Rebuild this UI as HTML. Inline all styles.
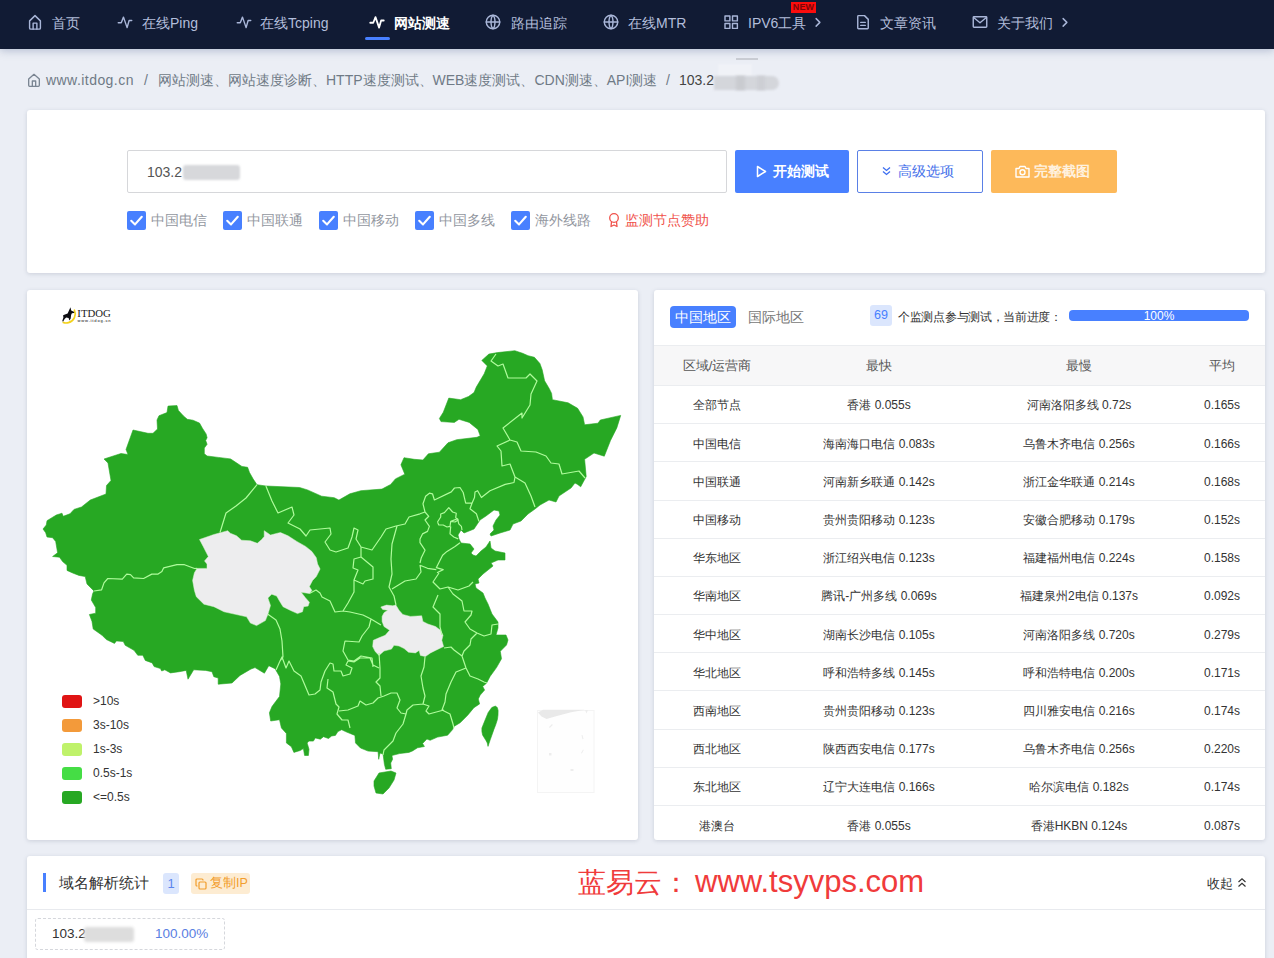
<!DOCTYPE html>
<html lang="zh"><head><meta charset="utf-8"><title>ITDOG</title>
<style>
*{box-sizing:border-box;margin:0;padding:0}
html,body{width:1274px;height:958px;overflow:hidden;background:#ebeef5;font-family:"Liberation Sans",sans-serif;font-size:14px;color:#333}
#pg{position:relative;width:1274px;height:958px;overflow:hidden}
.abs{position:absolute;white-space:nowrap}
#nav{position:absolute;left:0;top:0;width:1274px;height:49px;background:#111b34;box-shadow:0 2px 8px rgba(120,135,170,.45)}
.ni{position:absolute;top:0;height:46px;line-height:46px;font-size:14px;color:#b3bedb;white-space:nowrap}
.ni.act{color:#fff;font-weight:bold}
.nic{position:absolute;top:13px;width:18px;height:18px}
.nic svg{display:block;width:18px;height:18px;fill:none;stroke:#a9b6d8;stroke-width:1.9;stroke-linecap:round;stroke-linejoin:round}
.bc{position:absolute;top:70px;height:20px;line-height:20px;font-size:14px;color:#6f7a86;white-space:nowrap}
.card{position:absolute;background:#fff;border-radius:3px;box-shadow:0 1px 4px rgba(60,70,100,.18)}
.btn{position:absolute;top:150px;height:43px;line-height:43px;border-radius:2px;font-size:14px;text-align:center;white-space:nowrap}
.cb{position:absolute;top:211px;width:19px;height:19px;background:#4880ff;border-radius:2px}
.cb svg{display:block;width:19px;height:19px}
.cl{position:absolute;top:210px;height:20px;line-height:20px;font-size:14px;color:#93979f;white-space:nowrap}
.lg{position:absolute;left:62px;width:20px;height:13px;border-radius:3px}
.lt{position:absolute;left:93px;height:14px;line-height:14px;font-size:12px;color:#333;white-space:nowrap}
.hl{position:absolute;left:654px;width:611px;height:1px;background:#ebedf0}
.td{position:absolute;height:20px;line-height:20px;font-size:12px;color:#333;text-align:center;white-space:nowrap}
.th{position:absolute;top:356px;height:20px;line-height:20px;font-size:13px;color:#555;text-align:center;white-space:nowrap}
.blur{position:absolute;background:#d6d6d6;border-radius:3px;filter:blur(1.5px)}
</style></head><body><div id="pg">

<!-- NAV -->
<div id="nav">
 <div class="nic" style="left:26px"><svg viewBox="0 0 24 24"><path d="M4.800 10.500 12 3.500l7.200 7V20a1.500 1.500 0 0 1-1.500 1.500H6.300A1.500 1.500 0 0 1 4.800 20Z"/><path d="M9.500 21.500v-8h5v8"/></svg></div>
 <div class="ni" style="left:52px">首页</div>
 <div class="nic" style="left:116px"><svg viewBox="0 0 24 24"><path d="M3 13h4L10 5.500l4.800 14 2.700-9.500h3.500"/></svg></div>
 <div class="ni" style="left:142px">在线Ping</div>
 <div class="nic" style="left:235px"><svg viewBox="0 0 24 24"><path d="M3 13h4L10 5.500l4.800 14 2.700-9.500h3.500"/></svg></div>
 <div class="ni" style="left:260px">在线Tcping</div>
 <div class="nic" style="left:368px"><svg viewBox="0 0 24 24" style="stroke:#fff;stroke-width:2.4"><path d="M3 13h4L10 5.500l4.800 14 2.700-9.500h3.500"/></svg></div>
 <div class="ni act" style="left:394px">网站测速</div>
 <div class="abs" style="left:365px;top:37px;width:25px;height:3px;border-radius:2px;background:#4880ff"></div>
 <div class="nic" style="left:484px"><svg viewBox="0 0 24 24"><circle cx="12" cy="12" r="9"/><path d="M3 12h18M12 3c-3.5 3-3.5 15 0 18M12 3c3.5 3 3.5 15 0 18"/></svg></div>
 <div class="ni" style="left:511px">路由追踪</div>
 <div class="nic" style="left:602px"><svg viewBox="0 0 24 24"><circle cx="12" cy="12" r="9"/><path d="M3 12h18M12 3c-3.5 3-3.5 15 0 18M12 3c3.5 3 3.5 15 0 18"/></svg></div>
 <div class="ni" style="left:628px">在线MTR</div>
 <div class="nic" style="left:722px"><svg viewBox="0 0 24 24"><rect x="4" y="4" width="6.5" height="6.5"/><rect x="14" y="4" width="6.5" height="6.5"/><rect x="4" y="14" width="6.5" height="6.5"/><rect x="14" y="14" width="6.5" height="6.5"/></svg></div>
 <div class="ni" style="left:748px">IPV6工具</div>
 <div class="abs" style="left:791px;top:2px;width:25px;height:11px;background:#fb0d0d;color:#7a0606;font-size:9px;line-height:11px;text-align:center;font-weight:bold;letter-spacing:.2px">NEW</div>
 <div class="nic" style="left:809px"><svg viewBox="0 0 24 24"><path d="M9.5 7.5 14.5 12.5 9.5 17.5"/></svg></div>
 <div class="nic" style="left:854px"><svg viewBox="0 0 24 24"><path d="M6 3.5h8l5 5V20a1 1 0 0 1-1 1H6a1 1 0 0 1-1-1V4.500a1 1 0 0 1 1-1Z"/><path d="M9 12.500h6M9 16.500h6"/></svg></div>
 <div class="ni" style="left:880px">文章资讯</div>
 <div class="nic" style="left:971px"><svg viewBox="0 0 24 24"><rect x="3" y="5" width="18" height="14" rx="1"/><path d="M3.500 6 12 13l8.500-7"/></svg></div>
 <div class="ni" style="left:997px">关于我们</div>
 <div class="nic" style="left:1056px"><svg viewBox="0 0 24 24"><path d="M9.500 7.500 14.500 12.500 9.500 17.500"/></svg></div>
</div>

<!-- BREADCRUMB -->
<div class="abs" style="left:26px;top:72px;width:16px;height:16px"><svg viewBox="0 0 24 24" width="16" height="16" fill="none" stroke="#7a8592" stroke-width="2" stroke-linejoin="round"><path d="M4 10.500 12 3.500l8 7V20a1.500 1.500 0 0 1-1.500 1.500h-13A1.500 1.500 0 0 1 4 20Z"/><path d="M9.500 21.500v-8h5v8"/></svg></div>
<div class="bc" style="left:46px;letter-spacing:.45px">www.itdog.cn</div>
<div class="bc" style="left:144px">/</div>
<div class="bc" style="left:158px">网站测速、网站速度诊断、HTTP速度测试、WEB速度测试、CDN测速、API测速</div>
<div class="bc" style="left:666px">/</div>
<div class="bc" style="left:679px;color:#444">103.2</div>
<div class="abs" style="left:718px;top:64px;width:34px;height:12px;background:#f0f2f7;filter:blur(1px)"></div><div class="blur" style="left:714px;top:75.500px;width:65px;height:14.500px;background:#d4d6db;border-radius:1px 8px 8px 1px;filter:blur(1px)"></div><div class="abs" style="left:736px;top:76px;width:9px;height:14px;background:#c9cbd0;filter:blur(1.500px)"></div><div class="abs" style="left:757px;top:76px;width:8px;height:14px;background:#cdcfd4;filter:blur(1.500px)"></div>
<div class="abs" style="left:736px;top:58px;width:22px;height:2px;background:#c9ccd3;filter:blur(.6px)"></div>

<!-- CARD 1 -->
<div class="card" style="left:27px;top:110px;width:1238px;height:163px"></div>
<div class="abs" style="left:127px;top:150px;width:600px;height:43px;border:1px solid #d6d7da;border-radius:2px;background:#fff"></div>
<div class="abs" style="left:147px;top:161.500px;height:20px;line-height:20px;font-size:14px;color:#555">103.2</div>
<div class="blur" style="left:183px;top:165px;width:57px;height:14.500px;background:#d7d8db;filter:blur(.8px)"></div>
<div class="btn" style="left:735px;width:114px;background:#4880ff;color:#fff;font-weight:bold"><svg style="vertical-align:-2px;margin-right:6px" width="11" height="13" viewBox="0 0 11 13" fill="none" stroke="#fff" stroke-width="1.5" stroke-linejoin="round"><path d="M1.500 1.500 9.500 6.500 1.500 11.500Z"/></svg>开始测试</div>
<div class="btn" style="left:857px;width:126px;background:#fff;color:#4671ea;border:1px solid #5a80e6;line-height:41px;padding-right:5px"><svg style="vertical-align:0px;margin-right:7px" width="9" height="10" viewBox="0 0 9 10" fill="none" stroke="#3d6ff0" stroke-width="1.300"><path d="M1 1.500 4.500 4.500 8 1.500M1 5.500 4.500 8.500 8 5.500"/></svg>高级选项</div>
<div class="btn" style="left:991px;width:126px;background:#fdb95a;color:#fff1de;font-weight:bold;padding-right:4px"><svg style="vertical-align:-2px;margin-right:4px" width="15" height="13" viewBox="0 0 15 13" fill="none" stroke="#fff" stroke-width="1.400" stroke-linejoin="round"><path d="M1 3.500h3l1-2h5l1 2h3v8.500H1Z"/><circle cx="7.500" cy="7.300" r="2.500"/></svg>完整截图</div>

<div class="cb" style="left:127px"><svg viewBox="0 0 18 18" fill="none" stroke="#fff" stroke-width="2" stroke-linecap="round" stroke-linejoin="round"><path d="M4 9.300 7.600 12.700 14 5.500"/></svg></div><div class="cl" style="left:151px">中国电信</div>
<div class="cb" style="left:223px"><svg viewBox="0 0 18 18" fill="none" stroke="#fff" stroke-width="2" stroke-linecap="round" stroke-linejoin="round"><path d="M4 9.300 7.600 12.700 14 5.500"/></svg></div><div class="cl" style="left:247px">中国联通</div>
<div class="cb" style="left:319px"><svg viewBox="0 0 18 18" fill="none" stroke="#fff" stroke-width="2" stroke-linecap="round" stroke-linejoin="round"><path d="M4 9.300 7.600 12.700 14 5.500"/></svg></div><div class="cl" style="left:343px">中国移动</div>
<div class="cb" style="left:415px"><svg viewBox="0 0 18 18" fill="none" stroke="#fff" stroke-width="2" stroke-linecap="round" stroke-linejoin="round"><path d="M4 9.300 7.600 12.700 14 5.500"/></svg></div><div class="cl" style="left:439px">中国多线</div>
<div class="cb" style="left:511px"><svg viewBox="0 0 18 18" fill="none" stroke="#fff" stroke-width="2" stroke-linecap="round" stroke-linejoin="round"><path d="M4 9.300 7.600 12.700 14 5.500"/></svg></div><div class="cl" style="left:535px">海外线路</div>
<svg class="abs" style="left:607px;top:212px" width="14" height="16" viewBox="0 0 14 16" fill="none" stroke="#f0524b" stroke-width="1.300" stroke-linejoin="round"><circle cx="7" cy="6" r="4.300"/><path d="M4.500 9.800 4 14.500 7 13 10 14.500 9.500 9.800"/></svg>
<div class="cl" style="left:625px;color:#f0524b">监测节点赞助</div>

<!-- CARD 2 (map) -->
<div class="card" style="left:27px;top:290px;width:611px;height:550px"></div>
<svg class="abs" style="left:0;top:0" width="1274" height="958" viewBox="0 0 1274 958">
<path d="M168,406.1 L177,405.6 L178.4,410.4 L183.5,416 L187.3,419.3 L193,420.2 L199.5,423.1 L202.4,428.2 L206.1,433.9 L207.1,437.7 L205.7,440.5 L207.1,444.3 L204.3,448 L204.3,453.7 L207.1,456 L218.4,457.4 L230.6,458.9 L235.3,462.1 L241.9,466.4 L247.6,467.3 L249.5,472.5 L253.2,479.1 L257,484.7 L265.9,486 L299.6,487.5 L307.5,489.9 L321.6,496.2 L334.2,497.7 L338.9,500.1 L349.9,493.8 L360.9,490.7 L382,489.1 L390.7,484.4 L395.4,478.9 L404.8,474.2 L400.9,464.8 L404,457.7 L414.2,459.3 L422.9,460 L428.4,453.8 L439.4,452.2 L448,442.8 L456.7,439.7 L477,437.3 L480.2,435.8 L477.9,429.5 L469.2,422.4 L459,419.3 L454.3,422.4 L441,421.6 L439.4,418.5 L443.3,412.2 L448.8,398.1 L460.6,399.7 L468.5,396.5 L474,392.6 L476.3,387.1 L484.2,373.8 L487.3,365.9 L481.8,360.4 L488.9,354.1 L497.5,352.6 L514.8,350.7 L522.6,353.3 L528.1,355.7 L534.4,357.3 L539.9,363.5 L542.2,369.8 L544.6,380.8 L549.3,388.7 L551.6,393.4 L552.4,399.7 L568.1,402.8 L577.6,408.3 L583,416.9 L584.6,424.8 L598,423.2 L600.3,420 L620.7,415.4 L616.8,427.9 L610.5,440.5 L604.3,456.2 L594,453 L584.6,459.3 L586.2,476.6 L580.7,486.8 L577.6,484.4 L575,483 L571,488 L559,496 L556,502 L549,500 L540,505 L535,509 L528,514 L521,521 L513,524 L510,530 L500,533 L491,536 L490,534 L494,530 L493,526 L496,520 L500,515 L499,511 L494,510 L490,513 L486,516 L480,520 L474,529 L469,531 L464,533 L461,530 L458,535 L459,539 L461,543 L470,544 L474,549 L471,553 L473,555 L476,556 L481,551 L486,547 L490,541 L491,548 L495,551 L500,552 L505,553 L505,560 L498,560 L491,563 L493,566 L488,570 L483,574 L478,579 L479,583 L475,584 L476,588 L483,593 L485,598 L488,604 L492,614 L498,622 L498,628 L496,635 L506,635 L508,640 L506.5,645 L500.3,651.3 L501.5,658.8 L496.5,667.6 L490.2,676.3 L486.5,683.2 L482.7,686.4 L484.6,690.1 L480.2,695.1 L478.3,698.9 L479.6,703.9 L473.9,707.7 L467.7,715.2 L460.2,722.7 L453.9,726.5 L452.6,729.6 L447.6,735.2 L437.6,737.1 L430.1,740.3 L426.9,739 L422.6,743.4 L424.4,746.5 L417.5,747.8 L412.5,750.9 L408.9,752.4 L399.5,753.6 L391.9,755.5 L392.6,759.3 L390.7,763 L391.3,768.7 L385.7,769.3 L384.4,764.3 L383.1,754.2 L380,753 L378.7,759.3 L378.1,751.7 L368.1,751.1 L360.5,748 L355.5,742.9 L354.9,735.4 L345.5,731.6 L341.7,729.7 L337.9,731.6 L335.4,735.4 L331.6,736 L328.5,738.5 L323.5,736.7 L320.3,739.2 L315.3,737.9 L313.4,741.1 L309,741.1 L307.1,742.9 L309,749.2 L308.4,755.5 L304.6,755.5 L303.4,748.6 L300.2,750.5 L293.9,752.4 L291.4,746.7 L286.4,742.9 L286.4,733.5 L281.4,727.9 L279.5,719.7 L270.7,721 L269.4,712.8 L272,706.5 L275.7,701.5 L279.5,696.5 L280.8,683.9 L279.5,676.4 L275.1,668.8 L268.8,665.7 L264.4,673.2 L255,667.6 L251,669 L240,675.4 L232,683 L218.2,684.2 L218.2,678 L213.8,676.7 L212,671.7 L205.6,670.4 L193.7,669.8 L188,679.2 L186.2,670.4 L179.2,671.7 L170.5,672.9 L164.8,669.8 L161.7,671 L160.4,668.5 L154.1,666.6 L152.2,662.9 L145.3,660.4 L142.8,655.3 L137.8,655.3 L134,650.3 L125.2,645.3 L123.3,641.5 L116.4,640.9 L114.5,643.4 L106.4,639.6 L102,635.2 L93.2,629 L92,621.4 L89.4,614.5 L95.7,613.2 L95.7,607.6 L91.3,600 L92.6,593.8 L94,591 L87,584 L85.2,576.6 L79,575.4 L72.7,573 L67,570.4 L67,565.3 L62.6,561.6 L59.5,557.2 L52.6,556.5 L57.6,552.8 L55.7,541.5 L52.6,537.7 L47,537 L45.7,532.7 L43,529 L46.3,525 L47,520.7 L56.3,515 L62,513.2 L63.2,516.3 L70,513.8 L74,509.4 L81.5,507 L90.3,500 L106,494 L106.5,485.5 L111,480.5 L108,463 L104,459 L121,453.5 L128,454.5 L126,449.5 L133,430 L148,433.3 L153,433.3 L157.5,429 L157,420 L159,415.7 L167,412.6ZM374,781 L379,773 L391,771 L396,773 L394,780 L389,788 L383,794 L376,793 L374,786ZM495.3,706.1 L497.3,707.5 L498.1,710.4 L498,715 L497.4,719.5 L495.8,724.5 L493.9,729.4 L490.4,739.3 L488,746.4 L487.3,743 L486.1,740.7 L482.6,735.1 L481.9,731.5 L481.9,728 L484.7,721 L488.2,712.5 L491.8,707.5Z" fill="#27a823" stroke="#27a823" stroke-width="0.6" stroke-linejoin="round"/>
<path d="M199.5,539.5 L213.9,534.5 L227.7,530.7 L230.3,533.2 L236.5,535.8 L241.6,540.2 L250.4,540.8 L257.3,543.3 L261.7,539.5 L264.2,536.4 L264.2,530.7 L270.5,535.1 L277.4,533.2 L280.5,532.6 L288,535.8 L296.8,541.4 L305.6,546.4 L311.9,551.5 L316.3,557.7 L317.6,564 L320.1,569 L316.3,576.6 L312.6,580.4 L309.4,586.6 L311.9,590.4 L309.4,593.5 L301.2,592.3 L305.6,597.9 L309.4,602.3 L308.1,606.1 L303.7,606.7 L302.5,611.8 L297.5,613.6 L290.6,610.5 L283,606.7 L279.2,600.5 L276.7,596.1 L271.7,594.2 L267.9,598 L270.5,605.5 L267.9,614.3 L265.4,620.6 L256.6,625.6 L250.4,623.1 L246.6,616.8 L235.3,614.3 L224,611.8 L213.9,606.7 L203.9,604.2 L196.3,596.7 L194.4,590.4 L192.6,580.4 L194.4,572.8 L197,568.4 L207,568.4 L207,564 L204.5,560.9 L208.3,556.5 L203.2,546.4ZM380.8,607 L386.5,605.1 L392.8,605.8 L395.9,605.1 L399,610.2 L402.8,614.5 L410.4,616.4 L421.7,615.8 L422.9,621.5 L427.9,624 L435.5,626.5 L440.5,630.3 L443,635.3 L441.8,640.3 L443.6,646.6 L435.5,650.4 L430.5,652.9 L425.4,656.6 L420.4,655.4 L419.1,650.4 L415.4,652.9 L408.5,652.2 L404.1,648.5 L399,646 L394,645.3 L391.5,649.1 L384,651 L379,655.4 L375.2,651.6 L372.7,646.6 L373.3,640.3 L379,637.8 L385.2,635.3 L389.6,630.3 L384,626.5 L382.1,621.5 L382.1,616.4 L384,612.7 L387.7,610.2 L382.7,609.5Z" fill="#ededee"/>
<g fill="none" stroke="#affc9c" stroke-width="1.2" stroke-linejoin="round">
<path d="M257,484.7 L246,498 L236,506 L226,513 L220,532.5M197,568.4 L194.5,568.5 L184.5,564.7 L176.9,564.7 L163.7,567.8 L161.9,571.6 L158.1,574.1 L151.8,574.1 L143.6,578.5 L133.6,577.9 L130.5,574.7 L126.7,574.1 L122.3,579.1 L107.8,578.5 L104,582.9 L101.6,589.8 L94,591M265.9,486 L272,501 L278,513 L292,507 L294,515 L288,523 L300,529 L306,536 L310,530 L330,528 L331,534 L325,542 L330,550 L336,552 L348,548 L352,537 L354,528 L358,530 L356,539 L361,547 L372,550 L381,537 L386,529 L396,526 L405,524 L409,517 L420,513.8 L425,512 L423,503.8 L425.6,496.3 L429.4,493.2 L432.5,493.8 L434.4,500 L451.3,491.9 L454.5,488 L460,487.5 L463.2,492.5 L464.5,498.2 L465.7,503.2 L472,503.2 L474.5,497.5 L475,492 L477.6,490.7 L481.4,497.5 L490,490.7 L505.2,484.4 L514,482.5 L515,477M397,526 L392,544 L391,559 L392,574 L389,587 L394,596 L396,605M420,565 L421,572 L416,579 L405,581 L392,589M420,565.2 L427.5,568.3 L436.3,569.6M439,573 L433,582 L440,589 L448,587 L458,590 L469,586 L473,582M361,547 L361,557 L354,559 L353,568 L358,570 L354,580 L354,592 L348,603 L343,611 L350,612 L363,615 L371,619M361,557 L373,567 L373,579 L365,581 L363,584 L354,580M309.4,593.5 L316,590 L320,593 L322,597 L330,601 L335,612 L343,611M267.9,614.3 L276,620 L280,629 L282,641 L283,657 L280,661 L276,670M280,661 L282,657 L286,668 L289,661 L294,671 L301,676 L309,695 L315,694 L320,690 L321,682 L325,671 L330,663 L333,664 L334,671 L341,671 L343,676 L350,674 L352,668 L346,665 L348,661 L354,662 L360,658 L370,658 L373,665 L379,668M371,619 L369,627 L362,636 L359,642 L345,641 L343,651 L348,660 L354,661 L361,656 L372,658 L373,667M371,619 L381,625M328,679 L327,688 L333,692 L336,704 L339,707 L337,714 L342,720 L348,720 L350,728M339,711 L348,710 L358,706 L360,701 L366,705 L373,703 L378,698 L384,696 L391,693 L397,693 L400,700 L397,708 L401,713 L406,714M406,714 L403,724 L396,733 L393,741 L384,750 L383,755M379,653 L380,668 L380,678 L376,682 L380,686 L381,696M406,714 L407,710 L413,705 L423,704 L429,706 L426,711 L429,714 L440,711 L444,710M425,657 L424,667 L421,676 L423,688 L425,696 L423,704M466,668 L456,672 L451,682 L446,694 L445,702 L442,710 L450,714 L453,724 L454,728M466,668 L470,676 L478,679 L484,682 L487,683M444,648 L451,647 L454,650 L462,656 L466,668M462,656 L464,651 L470,645 L471,639 L477,633M438,595 L433,607 L440,614 L440,627 L442,635M448,587 L453,594 L462,601 L464,611 L472,611 L471,615 L465,622 L470,629 L477,633 L484,636 L491,634 L492,625 L498,624M496,354 L491,361 L498,366 L503,364 L508,378 L526,378 L530,374 L537,381 L531,394 L530,405 L522,418 L522,413 L503,428 L510,440M510,440 L517,442 L521,451 L536,452 L546,456 L551,463 L559,464 L562,474 L579,471 L585,478M510,440 L497,446 L501,451 L502,466 L510,464 L515,477 L525,483 L531,496 L535,507M437.5,522 L440.7,517 L440.7,514 L444.4,512.6 L448.8,507.6 L452.6,512 L456.3,513.2 L455.7,517.6 L458.2,520 L455,522 L450.7,521.4 L450,526.4 L447,527 L443.2,525 L438.8,525 L437.5,522M450.7,521.4 L457.6,518.8 L458.8,523.9 L461.4,526.4 L462,530M450.7,526.4 L450,533.9 L453.8,537 L458.2,538.9M460,542.7 L455,546.4 L447,551.4 L442.6,555.2 L436.3,567.7 L443.2,569.6 L437,572.7M472,503.2 L470,508.8 L476.4,513.8 L478.9,521.4M425,512 L428.8,516.3 L425,520 L429.4,526.4 L427.5,531.4 L422.5,533.9 L420,538.9 L420,542.7 L425,550.2 L421.3,557.7 L420,563"/>
<path d="M199.5,539.5 L213.9,534.5 L227.7,530.7 L230.3,533.2 L236.5,535.8 L241.6,540.2 L250.4,540.8 L257.3,543.3 L261.7,539.5 L264.2,536.4 L264.2,530.7 L270.5,535.1 L277.4,533.2 L280.5,532.6 L288,535.8 L296.8,541.4 L305.6,546.4 L311.9,551.5 L316.3,557.7 L317.6,564 L320.1,569 L316.3,576.6 L312.6,580.4 L309.4,586.6 L311.9,590.4 L309.4,593.5 L301.2,592.3 L305.6,597.9 L309.4,602.3 L308.1,606.1 L303.7,606.7 L302.5,611.8 L297.5,613.6 L290.6,610.5 L283,606.7 L279.2,600.5 L276.7,596.1 L271.7,594.2 L267.9,598 L270.5,605.5 L267.9,614.3 L265.4,620.6 L256.6,625.6 L250.4,623.1 L246.6,616.8 L235.3,614.3 L224,611.8 L213.9,606.7 L203.9,604.2 L196.3,596.7 L194.4,590.4 L192.6,580.4 L194.4,572.8 L197,568.4 L207,568.4 L207,564 L204.5,560.9 L208.3,556.5 L203.2,546.4ZM380.8,607 L386.5,605.1 L392.8,605.8 L395.9,605.1 L399,610.2 L402.8,614.5 L410.4,616.4 L421.7,615.8 L422.9,621.5 L427.9,624 L435.5,626.5 L440.5,630.3 L443,635.3 L441.8,640.3 L443.6,646.6 L435.5,650.4 L430.5,652.9 L425.4,656.6 L420.4,655.4 L419.1,650.4 L415.4,652.9 L408.5,652.2 L404.1,648.5 L399,646 L394,645.3 L391.5,649.1 L384,651 L379,655.4 L375.2,651.6 L372.7,646.6 L373.3,640.3 L379,637.8 L385.2,635.3 L389.6,630.3 L384,626.5 L382.1,621.5 L382.1,616.4 L384,612.7 L387.7,610.2 L382.7,609.5Z" stroke="#d8f5d0" stroke-width="0.5"/>
</g>
<!-- south china sea inset -->
<rect x="537.500" y="710.500" width="56.500" height="82" fill="#fefefe" stroke="#f4f4f4" stroke-width="1"/>
<path d="M538,712.500 L543,709.800 L585,709.800 L571,712.300 L556,716.300 L546.500,719 L541.500,716.500Z" fill="#e9e9e9"/>
<path d="M585,710 l3,0 l-1.500,3.500z M549,727 l3,-3 l.8,1 l-3,3z M582.500,735 l1,4 l-1,.3 l-1,-4z M581,753 l2,-3.500 l.8,.6 l-2,3.500z M549,753 h2.500 v2.500 h-2.500z M570.500,769 h3 v2 h-3z" fill="#ededed"/>
</svg>
<!-- logo -->
<svg class="abs" style="left:58px;top:304px" width="60" height="24" viewBox="0 0 60 24">
 <path d="M16.400,6.200 C18.600,11 16.200,17 10.500,18.600 C8.500,19.200 6.800,19.100 5.300,18.500" fill="none" stroke="#f3d21c" stroke-width="1.700" stroke-linecap="round"/>
 <path d="M12.400,3.300 L13.200,6.400 L16.300,8 L16,9.100 L13.900,9.300 L13.100,11 L12.700,14.500 L11.300,16.600 L10.600,14 L8.200,13.600 L6.600,15 L5.200,17.600 L4.200,17.200 L5.400,13.500 L5.100,11.300 L7,10.400 L9.600,9.400 L11,6.400 Z" fill="#0c0c10"/>
 <text x="19.300" y="13.100" font-family="Liberation Serif, serif" font-size="11.200" fill="#1c1c1c" textLength="33.500" lengthAdjust="spacingAndGlyphs">ITDOG</text>
 <text x="19.600" y="18.400" font-family="Liberation Sans, sans-serif" font-size="3.800" fill="#555" font-weight="bold" textLength="33" lengthAdjust="spacing">www.itdog.cn</text>
</svg>
<!-- legend -->
<div class="lg" style="top:694.5px;background:#e01414"></div><div class="lt" style="top:694px">&gt;10s</div>
<div class="lg" style="top:718.5px;background:#f39a3a"></div><div class="lt" style="top:718px">3s-10s</div>
<div class="lg" style="top:742.5px;background:#bff26a"></div><div class="lt" style="top:742px">1s-3s</div>
<div class="lg" style="top:766.5px;background:#45dd45"></div><div class="lt" style="top:766px">0.5s-1s</div>
<div class="lg" style="top:790.5px;background:#27a823"></div><div class="lt" style="top:790px">&lt;=0.5s</div>

<!-- CARD 3 (table) -->
<div class="card" style="left:654px;top:290px;width:611px;height:550px"></div>
<div class="abs" style="left:670px;top:306px;width:66px;height:22px;line-height:22px;background:#4880ff;color:#fff;border-radius:4px;text-align:center;font-size:14px">中国地区</div>
<div class="abs" style="left:748px;top:305px;height:24px;line-height:24px;color:#777;font-size:14px">国际地区</div>
<div class="abs" style="left:870px;top:305px;width:22px;height:21px;line-height:21px;background:#dbe6fd;color:#4880ff;border-radius:3px;text-align:center;font-size:12.500px">69</div>
<div class="abs" style="left:898px;top:307px;height:20px;line-height:20px;color:#333;font-size:12px;letter-spacing:-.3px">个监测点参与测试，当前进度：</div>
<div class="abs" style="left:1069px;top:310px;width:180px;height:11px;line-height:12px;background:#4880ff;border-radius:4px;color:#fff;font-size:12px;text-align:center">100%</div>
<div class="abs" style="left:654px;top:345px;width:611px;height:40px;background:#f7f7f8;border-top:1px solid #ebedf0"></div>
<div class="th" style="left:654px;width:126px">区域/运营商</div>
<div class="th" style="left:779px;width:200px">最快</div>
<div class="th" style="left:979px;width:200px">最慢</div>
<div class="th" style="left:1179px;width:86px">平均</div>
<div class="hl" style="top:385px"></div>
<div class="hl" style="top:423px"></div>
<div class="hl" style="top:461px"></div>
<div class="hl" style="top:500px"></div>
<div class="hl" style="top:538px"></div>
<div class="hl" style="top:576px"></div>
<div class="hl" style="top:614px"></div>
<div class="hl" style="top:652px"></div>
<div class="hl" style="top:690px"></div>
<div class="hl" style="top:729px"></div>
<div class="hl" style="top:767px"></div>
<div class="hl" style="top:805px"></div>
<div class="td" style="left:654px;width:126px;top:395px">全部节点</div>
<div class="td" style="left:779px;width:200px;top:395px">香港 0.055s</div>
<div class="td" style="left:979px;width:200px;top:395px">河南洛阳多线 0.72s</div>
<div class="td" style="left:1179px;width:86px;top:395px">0.165s</div>
<div class="td" style="left:654px;width:126px;top:434px">中国电信</div>
<div class="td" style="left:779px;width:200px;top:434px">海南海口电信 0.083s</div>
<div class="td" style="left:979px;width:200px;top:434px">乌鲁木齐电信 0.256s</div>
<div class="td" style="left:1179px;width:86px;top:434px">0.166s</div>
<div class="td" style="left:654px;width:126px;top:472px">中国联通</div>
<div class="td" style="left:779px;width:200px;top:472px">河南新乡联通 0.142s</div>
<div class="td" style="left:979px;width:200px;top:472px">浙江金华联通 0.214s</div>
<div class="td" style="left:1179px;width:86px;top:472px">0.168s</div>
<div class="td" style="left:654px;width:126px;top:510px">中国移动</div>
<div class="td" style="left:779px;width:200px;top:510px">贵州贵阳移动 0.123s</div>
<div class="td" style="left:979px;width:200px;top:510px">安徽合肥移动 0.179s</div>
<div class="td" style="left:1179px;width:86px;top:510px">0.152s</div>
<div class="td" style="left:654px;width:126px;top:548px">华东地区</div>
<div class="td" style="left:779px;width:200px;top:548px">浙江绍兴电信 0.123s</div>
<div class="td" style="left:979px;width:200px;top:548px">福建福州电信 0.224s</div>
<div class="td" style="left:1179px;width:86px;top:548px">0.158s</div>
<div class="td" style="left:654px;width:126px;top:586px">华南地区</div>
<div class="td" style="left:779px;width:200px;top:586px">腾讯-广州多线 0.069s</div>
<div class="td" style="left:979px;width:200px;top:586px">福建泉州2电信 0.137s</div>
<div class="td" style="left:1179px;width:86px;top:586px">0.092s</div>
<div class="td" style="left:654px;width:126px;top:625px">华中地区</div>
<div class="td" style="left:779px;width:200px;top:625px">湖南长沙电信 0.105s</div>
<div class="td" style="left:979px;width:200px;top:625px">河南洛阳多线 0.720s</div>
<div class="td" style="left:1179px;width:86px;top:625px">0.279s</div>
<div class="td" style="left:654px;width:126px;top:663px">华北地区</div>
<div class="td" style="left:779px;width:200px;top:663px">呼和浩特多线 0.145s</div>
<div class="td" style="left:979px;width:200px;top:663px">呼和浩特电信 0.200s</div>
<div class="td" style="left:1179px;width:86px;top:663px">0.171s</div>
<div class="td" style="left:654px;width:126px;top:701px">西南地区</div>
<div class="td" style="left:779px;width:200px;top:701px">贵州贵阳移动 0.123s</div>
<div class="td" style="left:979px;width:200px;top:701px">四川雅安电信 0.216s</div>
<div class="td" style="left:1179px;width:86px;top:701px">0.174s</div>
<div class="td" style="left:654px;width:126px;top:739px">西北地区</div>
<div class="td" style="left:779px;width:200px;top:739px">陕西西安电信 0.177s</div>
<div class="td" style="left:979px;width:200px;top:739px">乌鲁木齐电信 0.256s</div>
<div class="td" style="left:1179px;width:86px;top:739px">0.220s</div>
<div class="td" style="left:654px;width:126px;top:777px">东北地区</div>
<div class="td" style="left:779px;width:200px;top:777px">辽宁大连电信 0.166s</div>
<div class="td" style="left:979px;width:200px;top:777px">哈尔滨电信 0.182s</div>
<div class="td" style="left:1179px;width:86px;top:777px">0.174s</div>
<div class="td" style="left:654px;width:126px;top:816px">港澳台</div>
<div class="td" style="left:779px;width:200px;top:816px">香港 0.055s</div>
<div class="td" style="left:979px;width:200px;top:816px">香港HKBN 0.124s</div>
<div class="td" style="left:1179px;width:86px;top:816px">0.087s</div>

<!-- CARD 4 -->
<div class="card" style="left:27px;top:856px;width:1238px;height:120px"></div>
<div class="abs" style="left:43px;top:873px;width:3px;height:19px;background:#4880ff"></div>
<div class="abs" style="left:59px;top:872px;height:22px;line-height:22px;font-size:15px;color:#333">域名解析统计</div>
<div class="abs" style="left:163px;top:873px;width:16px;height:21px;line-height:21px;background:#dbe6fd;color:#5c86ee;border-radius:3px;text-align:center;font-size:13px">1</div>
<div class="abs" style="left:191px;top:873px;width:59px;height:21px;line-height:21px;background:#fdecd2;color:#f29d2c;border-radius:3px;font-size:12.500px;padding-left:19px">复制IP</div>
<svg class="abs" style="left:195px;top:878px" width="12" height="12" viewBox="0 0 12 12" fill="none" stroke="#f29d2c" stroke-width="1.200"><rect x="4" y="4" width="7" height="7" rx="1"/><path d="M2.500 8H2a1 1 0 0 1-1-1V2a1 1 0 0 1 1-1h5a1 1 0 0 1 1 1v.5"/></svg>
<div class="abs" style="left:578px;top:862px;height:40px;line-height:40px;font-size:28px;color:#f03b3b">蓝易云：<span style="font-size:31px;margin-left:5px">www.tsyvps.com</span></div>
<div class="abs" style="left:1207px;top:873px;height:22px;line-height:22px;font-size:13px;color:#333">收起</div>
<svg class="abs" style="left:1237px;top:877px" width="10" height="11" viewBox="0 0 10 11" fill="none" stroke="#333" stroke-width="1.200"><path d="M1.500 5 5 1.800 8.500 5M1.500 9.500 5 6.300 8.500 9.500"/></svg>
<div class="abs" style="left:27px;top:909px;width:1238px;height:1px;background:#e8eaee"></div>
<div class="abs" style="left:35px;top:918px;width:190px;height:32px;border:1px dashed #d5d7dc;border-radius:3px"></div>
<div class="abs" style="left:52px;top:924px;height:20px;line-height:20px;font-size:13.500px;color:#333">103.2</div>
<div class="blur" style="left:84px;top:927px;width:50px;height:15px;background:#dddddd"></div>
<div class="abs" style="left:155px;top:924px;height:20px;line-height:20px;font-size:13.500px;color:#5a80e2">100.00%</div>

</div></body></html>
